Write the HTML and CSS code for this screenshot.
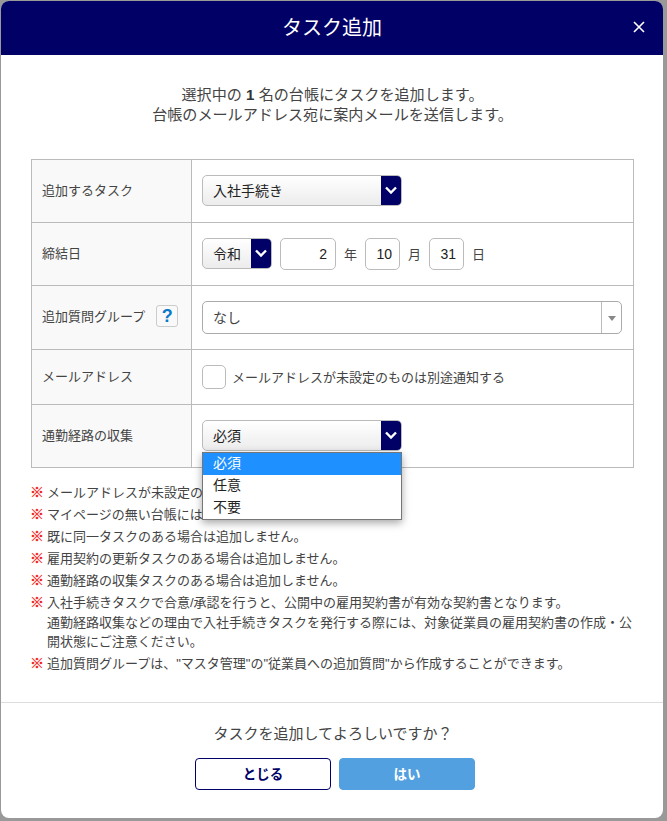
FILE: index.html
```html
<!DOCTYPE html>
<html lang="ja">
<head>
<meta charset="utf-8">
<title>タスク追加</title>
<link rel="stylesheet" href="styles.css">
</head>
<body>
<div class="modal">
  <header class="modal-head">
    <h1>タスク追加</h1>
    <button class="close" aria-label="閉じる"><svg width="14" height="14" viewBox="0 0 14 14"><path d="M2 2L12 12M12 2L2 12" stroke="#fff" stroke-width="1.6" fill="none"/></svg></button>
  </header>
  <div class="modal-body">
    <p class="lead">選択中の <b>1</b> 名の台帳にタスクを追加します。<br>台帳のメールアドレス宛に案内メールを送信します。</p>
    <table class="form">
      <tr class="r1">
        <th>追加するタスク</th>
        <td><div class="select wide"><span>入社手続き</span><i class="arrow"><svg width="14" height="9" viewBox="0 0 14 9"><path d="M2 1.5L7 6.5L12 1.5" stroke="#fff" stroke-width="2.4" fill="none"/></svg></i></div></td>
      </tr>
      <tr class="r2">
        <th>締結日</th>
        <td><div class="date">
          <div class="select era"><span>令和</span><i class="arrow"><svg width="14" height="9" viewBox="0 0 14 9"><path d="M2 1.5L7 6.5L12 1.5" stroke="#fff" stroke-width="2.4" fill="none"/></svg></i></div>
          <div class="num year">2</div><span class="unit">年</span>
          <div class="num">10</div><span class="unit">月</span>
          <div class="num">31</div><span class="unit">日</span>
        </div></td>
      </tr>
      <tr class="r3">
        <th><div class="help-row">追加質問グループ<span class="help">?</span></div></th>
        <td><div class="combo"><span>なし</span><i class="combo-arrow"></i></div></td>
      </tr>
      <tr class="r4">
        <th>メールアドレス</th>
        <td><label class="check"><i class="box"></i>メールアドレスが未設定のものは別途通知する</label></td>
      </tr>
      <tr class="r5">
        <th>通勤経路の収集</th>
        <td><div class="anchor">
          <div class="select wide"><span>必須</span><i class="arrow"><svg width="14" height="9" viewBox="0 0 14 9"><path d="M2 1.5L7 6.5L12 1.5" stroke="#fff" stroke-width="2.4" fill="none"/></svg></i></div>
          <ul class="menu"><li class="on">必須</li><li>任意</li><li>不要</li></ul>
        </div></td>
      </tr>
    </table>
    <ul class="notes">
      <li>メールアドレスが未設定の台帳には別途、ご通知が必要です。</li>
      <li>マイページの無い台帳には</li>
      <li>既に同一タスクのある場合は追加しません。</li>
      <li>雇用契約の更新タスクのある場合は追加しません。</li>
      <li>通勤経路の収集タスクのある場合は追加しません。</li>
      <li>入社手続きタスクで合意/承認を行うと、公開中の雇用契約書が有効な契約書となります。<br>通勤経路収集などの理由で入社手続きタスクを発行する際には、対象従業員の雇用契約書の作成・公開状態にご注意ください。</li>
      <li>追加質問グループは、"マスタ管理"の"従業員への追加質問"から作成することができます。</li>
    </ul>
  </div>
  <footer class="modal-foot">
    <p>タスクを追加してよろしいですか？</p>
    <div class="buttons">
      <button class="btn ghost">とじる</button>
      <button class="btn primary">はい</button>
    </div>
  </footer>
</div>
</body>
</html>
```
FILE: styles.css
```css
* { box-sizing: border-box; }
html, body { margin: 0; height: 100%; }
body {
  background: #999;
  padding: 1px 4px 3px 1px;
  font-family: "Liberation Sans", "Noto Sans CJK JP", sans-serif;
  color: #444;
  overflow: hidden;
}
.modal {
  height: 817px;
  background: #fff;
  border-radius: 8px;
  overflow: hidden;
  display: flex;
  flex-direction: column;
}
.modal-head {
  height: 54px;
  flex: none;
  background: #000066;
  color: #fff;
  display: flex;
  align-items: center;
  justify-content: center;
  position: relative;
}
.modal-head h1 { margin: 0; font-size: 20px; font-weight: 400; line-height: 54px; }
.close {
  position: absolute;
  right: 17px;
  top: 19px;
  width: 14px;
  height: 14px;
  padding: 0;
  border: 0;
  background: none;
  display: flex;
}
.modal-body { flex: 1; padding: 30px 29px 0 30px; }
.lead {
  margin: 0 0 34px;
  text-align: center;
  font-size: 15.1px;
  line-height: 20px;
  color: #444;
}
.lead b { color: #333; }
.form {
  width: 603px;
  border-collapse: collapse;
  table-layout: fixed;
  font-size: 13px;
}
.form th, .form td { border: 1px solid #bbb; padding: 0 10px 1px; vertical-align: middle; }
.form th { width: 160px; background: #f9f9f9; font-weight: 400; text-align: left; padding-bottom: 4px; }
.r1 { height: 63px; }
.r2 { height: 63px; }
.r3 { height: 64px; }
.r4 { height: 55px; }
.r5 { height: 63px; }
.select {
  height: 31px;
  border: 1px solid #bbb;
  border-radius: 5px;
  background: linear-gradient(#fff, #ececec);
  position: relative;
  display: flex;
  align-items: center;
  padding: 0 0 2px 10px;
  font-size: 14px;
  color: #222;
  overflow: hidden;
}
.select.wide { width: 200px; }
.select.era { width: 70px; }
.arrow {
  position: absolute;
  right: 0;
  top: -1px;
  bottom: -1px;
  width: 20px;
  background: #000066;
  display: flex;
  align-items: center;
  justify-content: center;
}
.date { display: flex; align-items: center; font-size: 13px; }
.num {
  width: 35px;
  height: 32px;
  border: 1px solid #bbb;
  border-radius: 5px;
  font-size: 14px;
  line-height: 30px;
  text-align: right;
  padding-right: 7px;
  color: #222;
}
.num.year { width: 56px; margin-left: 8px; padding-right: 8px; }
.unit { width: 29px; text-align: center; flex: none; color: #444; }
.help-row { display: flex; align-items: center; }
.help {
  width: 22px;
  height: 22px;
  margin-left: 11px;
  border: 1px solid #ccc;
  border-radius: 3px;
  color: #0b78c8;
  font-weight: 700;
  font-size: 18px;
  line-height: 20px;
  text-align: center;
  font-family: "Liberation Sans", sans-serif;
}
.combo {
  height: 33px;
  width: 420px;
  border: 1px solid #aaa;
  border-radius: 5px;
  display: flex;
  align-items: center;
  padding-left: 10px;
  font-size: 14px;
  position: relative;
}
.combo-arrow {
  position: absolute;
  right: 0;
  top: 0;
  bottom: 0;
  width: 20px;
  border-left: 1px solid #bbb;
}
.combo-arrow::after {
  content: "";
  position: absolute;
  left: 6px;
  top: 14px;
  border: 4px solid transparent;
  border-top: 5px solid #888;
  border-bottom: 0;
}
.check { display: flex; align-items: center; color: #444; }
.box {
  width: 24px;
  height: 24px;
  border: 1px solid #bbb;
  border-radius: 5px;
  margin-right: 6px;
  flex: none;
}
.anchor { position: relative; }
.menu {
  position: absolute;
  left: 0;
  top: 32px;
  width: 200px;
  margin: 0;
  padding: 0;
  list-style: none;
  background: #fff;
  border: 1px solid #767676;
  box-shadow: 0 3px 8px rgba(0, 0, 0, .35);
  font-size: 14px;
  z-index: 2;
  color: #222;
}
.menu li { height: 22px; line-height: 20px; padding-left: 10px; }
.menu li.on { background: #1e90ff; color: #fff; }
.notes {
  list-style: none;
  margin: 15px 0 0;
  padding: 0 0 0 16px;
  width: 604px;
  font-size: 13px;
  line-height: 19.5px;
  color: #444;
}
.notes li { position: relative; margin-bottom: 2.5px; }
.notes li::before {
  content: "※";
  position: absolute;
  left: -17px;
  top: 0;
  color: #f01010;
  font-weight: 900;
  font-size: 14px;
  -webkit-text-stroke: .3px #f01010;
}
.modal-foot {
  flex: none;
  height: 116px;
  border-top: 1px solid #ddd;
  text-align: center;
  padding-top: 20px;
}
.modal-foot p { margin: 0 0 14px; font-size: 15px; line-height: 21px; padding-left: 2px; color: #444; }
.buttons { display: flex; justify-content: center; gap: 8px; padding-left: 6px; }
.btn {
  width: 136px;
  height: 32px;
  border-radius: 4px;
  font: 700 13.5px "Liberation Sans", "Noto Sans CJK JP", sans-serif;
  padding: 0 0 2px;
}
.ghost { background: #fff; border: 1px solid #000066; color: #000066; }
.primary { background: #52a0e0; border: 1px solid #52a0e0; color: #fff; }
```
